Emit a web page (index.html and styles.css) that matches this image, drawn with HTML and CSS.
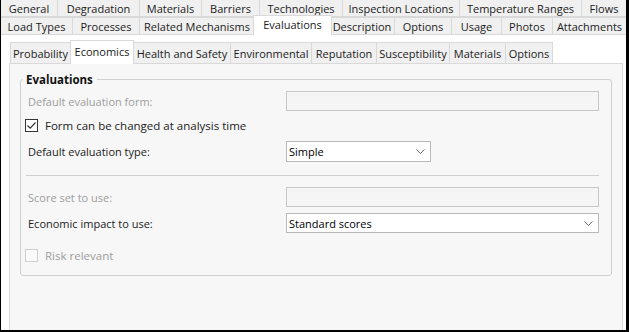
FILE: index.html
```html
<!DOCTYPE html>
<html>
<head>
<meta charset="utf-8">
<link rel="stylesheet" href="styles.css">
</head>
<body>
<div class="window">
  <div class="tabrow row1">
    <div class="tab w57">General</div>
    <div class="tab w82">Degradation</div>
    <div class="tab w62">Materials</div>
    <div class="tab w58">Barriers</div>
    <div class="tab w83">Technologies</div>
    <div class="tab w117">Inspection Locations</div>
    <div class="tab w122">Temperature Ranges</div>
    <div class="tab grow">Flows</div>
  </div>
  <div class="tabrow row2">
    <div class="tab w72">Load Types</div>
    <div class="tab w67">Processes</div>
    <div class="tab w115">Related Mechanisms</div>
    <div class="tab w75 sel">Evaluations</div>
    <div class="tab w65">Description</div>
    <div class="tab w57">Options</div>
    <div class="tab w50">Usage</div>
    <div class="tab w51">Photos</div>
    <div class="tab grow">Attachments</div>
  </div>
  <div class="outerpage">
    <div class="innertabs">
      <div class="itab w61">Probability</div>
      <div class="itab w64 sel">Economics</div>
      <div class="itab w97">Health and Safety</div>
      <div class="itab w81">Environmental</div>
      <div class="itab w65">Reputation</div>
      <div class="itab w73">Susceptibility</div>
      <div class="itab w56">Materials</div>
      <div class="itab w47">Options</div>
    </div>
    <div class="innerpage">
      <fieldset class="group">
        <legend>Evaluations</legend>
        <div class="content">
          <div class="row r-form">
            <span class="label dis">Default evaluation form:</span>
            <span class="field disabled"></span>
          </div>
          <div class="checkrow r-check">
            <span class="box checked"><svg width="11" height="11" viewBox="0 0 11 11"><path d="M1.5 5.5 L4.2 8.2 L9.5 2.5" fill="none" stroke="#333" stroke-width="1.2"/></svg></span>
            <span class="clabel">Form can be changed at analysis time</span>
          </div>
          <div class="row r-type">
            <span class="label">Default evaluation type:</span>
            <span class="field select short">Simple<svg class="chev" width="9" height="5" viewBox="0 0 9 5"><path d="M0.5 0.5 L4.5 4.5 L8.5 0.5" fill="none" stroke="#666" stroke-width="1"/></svg></span>
          </div>
          <div class="sep"></div>
          <div class="row r-score">
            <span class="label dis">Score set to use:</span>
            <span class="field disabled"></span>
          </div>
          <div class="row r-econ">
            <span class="label">Economic impact to use:</span>
            <span class="field select">Standard scores<svg class="chev" width="9" height="5" viewBox="0 0 9 5"><path d="M0.5 0.5 L4.5 4.5 L8.5 0.5" fill="none" stroke="#666" stroke-width="1"/></svg></span>
          </div>
          <div class="checkrow r-risk">
            <span class="box dbox"></span>
            <span class="clabel dis">Risk relevant</span>
          </div>
        </div>
      </fieldset>
    </div>
  </div>
</div>
</body>
</html>
```
FILE: styles.css
```css
* { box-sizing: border-box; }
html, body { margin: 0; padding: 0; }
body {
  width: 629px;
  height: 332px;
  overflow: hidden;
  font-family: "Open Sans", "Noto Sans", sans-serif;
  font-size: 11px;
  color: #1b1b1b;
  background: #fff;
}
.window {
  width: 629px;
  height: 332px;
  border-left: 1px solid #000;
  border-right: 3px solid #000;
  border-bottom: 2px solid #000;
  display: flex;
  flex-direction: column;
  background: #fff;
}
.tabrow {
  display: flex;
  height: 18px;
  position: relative;
}
.row1 { height: 17px; }
.tab {
  background: #f0f0f0;
  border-right: 1px solid #d9d9d9;
  border-bottom: 1px solid #d9d9d9;
  display: flex;
  align-items: center;
  justify-content: center;
  white-space: nowrap;
  line-height: 1;
}
.row2 .tab { border-top: 1px solid #d9d9d9; }
.tab.grow { flex: 1; border-right: none; }
.tab.sel {
  background: #fff;
  border: 1px solid #d9d9d9;
  border-bottom: none;
  margin: -2px -2px 0 -2px;
  height: 20px;
  padding-bottom: 3px;
  position: relative;
  z-index: 2;
}
.w47 { width: 47px; } .w50 { width: 50px; } .w51 { width: 51px; }
.w56 { width: 56px; } .w57 { width: 57px; } .w58 { width: 58px; }
.w61 { width: 61px; } .w62 { width: 62px; } .w64 { width: 64px; }
.w65 { width: 65px; } .w67 { width: 67px; } .w72 { width: 72px; }
.w73 { width: 73px; } .w75 { width: 75px; } .w81 { width: 81px; }
.w82 { width: 82px; } .w83 { width: 83px; } .w97 { width: 97px; }
.w115 { width: 115px; } .w117 { width: 117px; } .w122 { width: 122px; }
.tab.w75.sel { width: 79px; }

.outerpage {
  flex: 1;
  background: #fff;
  padding: 5px 3px 0 8px;
  display: flex;
  flex-direction: column;
}
.innertabs {
  display: flex;
  height: 23px;
  padding-top: 2px;
  padding-left: 1px;
}
.itab {
  background: #f0f0f0;
  border: 1px solid #d9d9d9;
  border-left: none;
  border-bottom: none;
  display: flex;
  align-items: center;
  justify-content: center;
  white-space: nowrap;
  height: 21px;
}
.itab:first-child { border-left: 1px solid #d9d9d9; }
.itab.sel {
  background: #fff;
  margin-top: -2px;
  height: 24px;
  padding-bottom: 2px;
  position: relative;
  z-index: 2;
  border-left: 1px solid #d9d9d9;
  margin-left: -1px;
}
.innerpage {
  flex: 1;
  background: #f7f7f7;
  border: 1px solid #d9d9d9;
  border-bottom: none;
  padding: 8px 10px 0 10px;
}
.group {
  margin: 0;
  border: 1px solid #d0d0d0;
  border-radius: 3px;
  padding: 0 12px 0 2px;
  height: 204px;
}
.group legend {
  font-weight: bold;
  font-size: 11.5px;
  padding: 0 4px 0 3px;
  margin-left: 0;
  color: #111;
}
.content {
  padding-left: 5px;
  display: flex;
  flex-direction: column;
}
.row {
  display: flex;
  align-items: center;
}
.label {
  width: 258px;
  flex: none;
}
.dis { color: #9d9d9d; }
.field {
  flex: 1;
  height: 20px;
  border: 1px solid #c3c3c3;
  display: flex;
  align-items: center;
  padding-left: 2px;
  position: relative;
}
.field.disabled { background: #f5f5f5; border-color: #c8c8c8; }
.field.select { background: #fff; border-color: #b9b9b9; color: #000; }
.field.short { flex: none; width: 145px; height: 21px; }
.chev { position: absolute; right: 5px; top: 7px; }
.r-form { margin-top: 4px; }
.checkrow {
  display: flex;
  align-items: center;
  margin-left: -3px;
}
.r-check { margin-top: 7px; }
.clabel { font-size: 11.5px; }
.box {
  width: 13px;
  height: 13px;
  border: 1px solid #333;
  background: #fff;
  display: flex;
  align-items: center;
  justify-content: center;
  margin-right: 7px;
}
.dbox { border-color: #cfcfcf; background: #fafafa; }
.r-type { margin-top: 8px; }
.sep {
  height: 1px;
  background: #cfcfcf;
  margin-top: 13px;
  margin-left: -2px;
}
.r-score { margin-top: 11px; }
.r-econ { margin-top: 6px; }
.r-risk { margin-top: 15px; }
```
